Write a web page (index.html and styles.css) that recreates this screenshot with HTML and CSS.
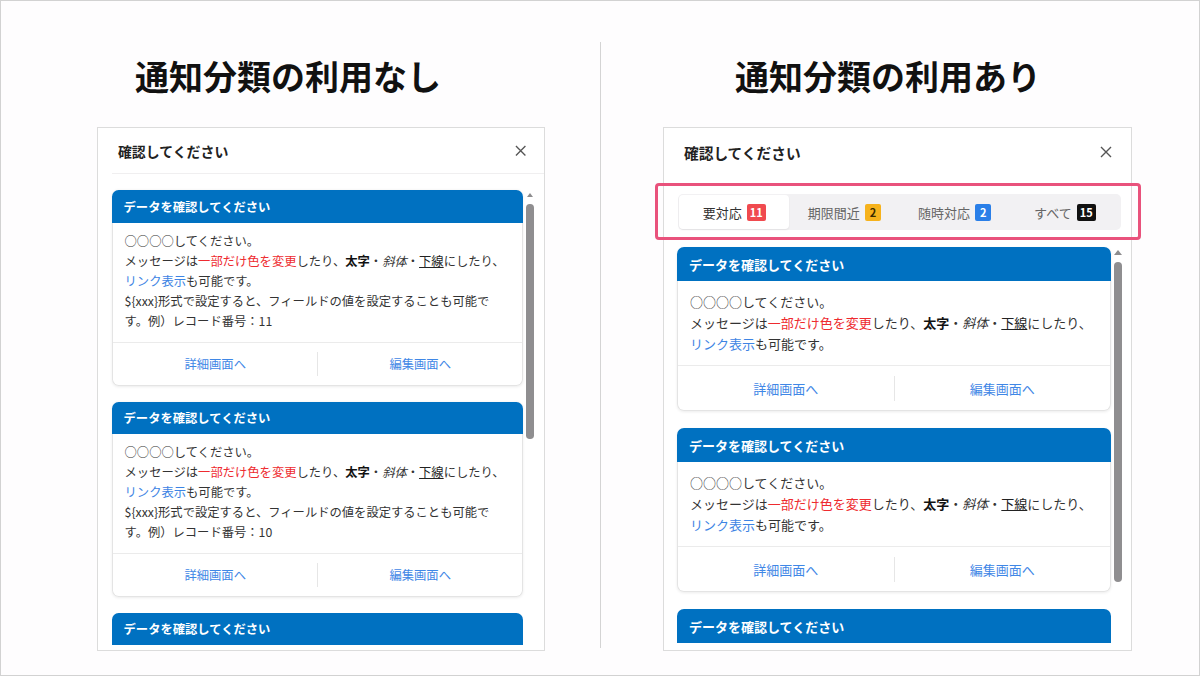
FILE: index.html
```html
<!DOCTYPE html>
<html lang="ja">
<head>
<meta charset="utf-8">
<title>通知分類の利用</title>
<link rel="stylesheet" href="styles.css">
</head>
<body>
<main class="slide">
  <section class="half half--left">
    <h1 class="heading">通知分類の利用なし</h1>
    <div class="panel panel--compact">
      <header class="panel-head panel-head--ruled">
        <span class="panel-title">確認してください</span>
        <svg class="close" width="12" height="12" viewBox="0 0 12 12"><path d="M1 1L11 11M11 1L1 11"/></svg>
      </header>
      <div class="panel-scroll">
        <div class="card-list">
          <article class="card">
            <h2 class="card-head">データを確認してください</h2>
            <div class="card-main">
              <p class="card-body">○○○○してください。<br>メッセージは<span class="red">一部だけ色を変更</span>したり、<b>太字</b>・<i>斜体</i>・<u>下線</u>にしたり、<br><a class="link">リンク表示</a>も可能です。<br>${xxx}形式で設定すると、フィールドの値を設定することも可能です。例）レコード番号：11</p>
              <div class="card-foot"><a class="foot-link">詳細画面へ</a><span class="foot-sep"></span><a class="foot-link">編集画面へ</a></div>
            </div>
          </article>
          <article class="card">
            <h2 class="card-head">データを確認してください</h2>
            <div class="card-main">
              <p class="card-body">○○○○してください。<br>メッセージは<span class="red">一部だけ色を変更</span>したり、<b>太字</b>・<i>斜体</i>・<u>下線</u>にしたり、<br><a class="link">リンク表示</a>も可能です。<br>${xxx}形式で設定すると、フィールドの値を設定することも可能です。例）レコード番号：10</p>
              <div class="card-foot"><a class="foot-link">詳細画面へ</a><span class="foot-sep"></span><a class="foot-link">編集画面へ</a></div>
            </div>
          </article>
          <article class="card card--peek">
            <h2 class="card-head">データを確認してください</h2>
          </article>
        </div>
        <div class="scrollbar"><span class="scroll-arrow"></span><span class="scroll-thumb"></span></div>
      </div>
    </div>
  </section>

  <div class="divider"></div>

  <section class="half half--right">
    <h1 class="heading">通知分類の利用あり</h1>
    <div class="panel">
      <header class="panel-head">
        <span class="panel-title">確認してください</span>
        <svg class="close" width="12" height="12" viewBox="0 0 12 12"><path d="M1 1L11 11M11 1L1 11"/></svg>
      </header>
      <div class="tabs-wrap">
        <nav class="tabs">
          <span class="tab tab--active">要対応<span class="badge badge--red">11</span></span>
          <span class="tab">期限間近<span class="badge badge--orange">2</span></span>
          <span class="tab">随時対応<span class="badge badge--blue">2</span></span>
          <span class="tab">すべて<span class="badge badge--black">15</span></span>
        </nav>
        <span class="highlight"></span>
      </div>
      <div class="panel-scroll">
        <div class="card-list">
          <article class="card">
            <h2 class="card-head">データを確認してください</h2>
            <div class="card-main">
              <p class="card-body">○○○○してください。<br>メッセージは<span class="red">一部だけ色を変更</span>したり、<b>太字</b>・<i>斜体</i>・<u>下線</u>にしたり、<br><a class="link">リンク表示</a>も可能です。</p>
              <div class="card-foot"><a class="foot-link">詳細画面へ</a><span class="foot-sep"></span><a class="foot-link">編集画面へ</a></div>
            </div>
          </article>
          <article class="card">
            <h2 class="card-head">データを確認してください</h2>
            <div class="card-main">
              <p class="card-body">○○○○してください。<br>メッセージは<span class="red">一部だけ色を変更</span>したり、<b>太字</b>・<i>斜体</i>・<u>下線</u>にしたり、<br><a class="link">リンク表示</a>も可能です。</p>
              <div class="card-foot"><a class="foot-link">詳細画面へ</a><span class="foot-sep"></span><a class="foot-link">編集画面へ</a></div>
            </div>
          </article>
          <article class="card card--peek">
            <h2 class="card-head">データを確認してください</h2>
          </article>
        </div>
        <div class="scrollbar"><span class="scroll-arrow"></span><span class="scroll-thumb"></span></div>
      </div>
    </div>
  </section>
</main>
</body>
</html>
```

FILE: styles.css
```css
* { box-sizing: border-box; margin: 0; padding: 0; }

html, body { width: 1200px; height: 676px; }

body {
  font-family: "Noto Sans CJK JP", "Noto Sans", sans-serif;
  color: #333;
  background: #fefdfe;
  overflow: hidden;
}

.slide {
  width: 1200px;
  height: 676px;
  border: 1px solid #d2d2d2;
  display: grid;
  grid-template-columns: 599px 1px 1fr;
}

.half {
  display: flex;
  flex-direction: column;
  align-items: flex-start;
}
.half--left { padding-left: 96px; }
.half--right { padding-left: 62px; }

.heading {
  margin-top: 55px;
  margin-bottom: 31px;
  font-size: 34px;
  line-height: 40px;
  font-weight: 700;
  color: #111;
}
.half--left .heading { margin-left: 38px; }
.half--right .heading { margin-left: 72px; }

.divider {
  margin-top: 41px;
  height: 606px;
  background: #d4d4d4;
}

/* panel */
.panel {
  width: 469px;
  height: 524px;
  background: #fff;
  border: 1px solid #dcdcdc;
  display: flex;
  flex-direction: column;
}
.panel--compact {
  zoom: 0.947;
  width: 473px;
  height: 553px;
}

.panel-head {
  flex-shrink: 0;
  height: 48px;
  display: flex;
  align-items: center;
  justify-content: space-between;
  padding: 0 19px 0 20px;
}
.panel-head--ruled {
  height: 49px;
  margin-left: 15px;
  padding-left: 6px;
  border-bottom: 1px solid #f0eff0;
}
.panel-title {
  font-size: 14.7px;
  font-weight: 700;
  color: #222;
}
.close {
  stroke: #555;
  stroke-width: 1.4;
  fill: none;
}

/* tabs */
.tabs-wrap {
  position: relative;
  flex-shrink: 0;
  margin: 18px 10px 0 14px;
}
.tabs {
  display: flex;
  height: 36px;
  padding: 1px;
  background: #f2f1f3;
  border-radius: 5px;
}
.tab {
  flex: 1;
  display: flex;
  align-items: center;
  justify-content: center;
  gap: 5px;
  font-size: 13px;
  color: #666;
  border-radius: 4px;
}
.tab--active {
  background: #fff;
  color: #333;
  box-shadow: 0 1px 2px rgba(0, 0, 0, 0.07);
}
.badge {
  min-width: 16px;
  height: 17px;
  padding: 0 3px;
  border-radius: 2px;
  font-size: 11px;
  line-height: 17px;
  font-weight: 700;
  color: #fff;
  text-align: center;
}
.badge--red { background: #f04a4f; }
.badge--orange { background: #f6b21c; color: #3a2a00; }
.badge--blue { background: #2a7fe8; }
.badge--black { background: #111; }

.highlight {
  position: absolute;
  top: -11px;
  right: -20px;
  bottom: -10px;
  left: -23px;
  border: 3px solid #e9527c;
  border-radius: 4px;
  pointer-events: none;
}

/* scroll area */
.panel-scroll {
  flex: 1;
  min-height: 0;
  overflow: hidden;
  display: flex;
  align-items: flex-start;
  padding: 17px 0 0 13px;
}
.panel--compact .panel-scroll { padding-left: 15px; }
.card-list {
  flex: 0 0 434px;
  display: flex;
  flex-direction: column;
  gap: 17px;
}
.scrollbar {
  flex: 0 0 14px;
  display: flex;
  flex-direction: column;
  align-items: center;
  padding-top: 3px;
}
.scroll-arrow {
  width: 0;
  height: 0;
  border-left: 4px solid transparent;
  border-right: 4px solid transparent;
  border-bottom: 5px solid #8d8c8e;
}
.scroll-thumb {
  margin-top: 7px;
  width: 8px;
  height: 320px;
  border-radius: 4px;
  background: #8f8e90;
}
.panel--compact .scroll-thumb { height: 248px; }

/* card */
.card {
  flex-shrink: 0;
  border-radius: 7px;
  box-shadow: 0 1px 3px rgba(0, 0, 0, 0.08);
}
.card--peek { box-shadow: none; }
.card-head {
  height: 34px;
  padding: 0 12px;
  display: flex;
  align-items: center;
  background: #0071c1;
  color: #fff;
  font-size: 13px;
  font-weight: 700;
  border-radius: 7px 7px 0 0;
}
.card-main {
  background: #fff;
  border: 1px solid #e4e4e4;
  border-top: 0;
  border-radius: 0 0 7px 7px;
}
.card-body {
  padding: 10px 12px 11px;
  font-size: 13px;
  line-height: 21px;
  color: #333;
}
.card-body b { color: #111; font-weight: 700; }
.card-body u { color: #222; }
.red { color: #ee2b2f; }
.link { color: #3d84e4; text-decoration: none; }

.card-foot {
  height: 45px;
  border-top: 1px solid #ebebeb;
  display: flex;
  align-items: center;
}
.foot-link {
  flex: 1;
  text-align: center;
  font-size: 13px;
  color: #3f87e6;
  text-decoration: none;
}
.foot-sep {
  width: 1px;
  height: 25px;
  background: #e6e6e6;
}
```
